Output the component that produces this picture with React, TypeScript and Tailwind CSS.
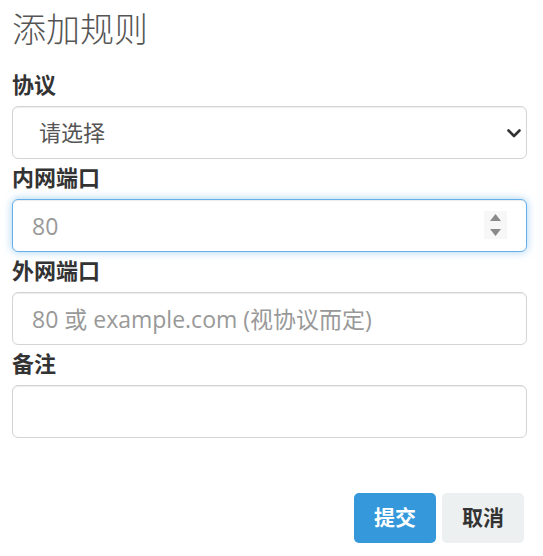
import React from "react";

const fontStack = '"Open Sans", "Noto Sans CJK SC", sans-serif';

function Label({ children, first }: { children: React.ReactNode; first?: boolean }) {
  return (
    <label
      className={`block h-[32px] leading-[32px] text-[22px] font-bold text-[#333] mb-[6px] ${first ? "mt-0" : "mt-[2px]"}`}
    >
      {children}
    </label>
  );
}

export default function App() {
  return (
    <div
      className="w-[543px] h-[556px] bg-white pl-[12px] pr-[16px] overflow-hidden"
      style={{ fontFamily: fontStack }}
    >
      <h3 className="mt-[7px] mb-[17px] h-[44px] leading-[44px] text-[34px] font-light text-[#555]">
        添加规则
      </h3>
      <form className="flex flex-col">
        <Label first>协议</Label>
        <div className="relative">
          <select
            className="block w-full h-[53px] appearance-none rounded-[6px] border border-[#d4d4d4] bg-white pl-[26px] pr-10 text-[22px] text-[#555] shadow-[inset_0_1px_1px_rgba(0,0,0,0.075)] outline-none"
            defaultValue=""
          >
            <option value="">请选择</option>
            <option value="tcp">TCP</option>
            <option value="udp">UDP</option>
            <option value="http">HTTP</option>
          </select>
          <svg
            className="pointer-events-none absolute right-[6px] top-[23px]"
            width="14"
            height="9"
            viewBox="0 0 14 9"
          >
            <path d="M1.5 1.5 L7 7 L12.5 1.5" fill="none" stroke="#333" strokeWidth="2.6" strokeLinecap="round" strokeLinejoin="round" />
          </svg>
        </div>

        <Label>内网端口</Label>
        <div className="relative">
          <input
            type="text"
            placeholder="80"
            className="block w-full h-[53px] rounded-[6px] border border-[#66afe9] bg-white pl-[19px] pr-12 text-[23px] text-[#555] placeholder:text-[#999] outline-none shadow-[inset_0_1px_1px_rgba(0,0,0,0.075),0_0_8px_rgba(102,175,233,0.6)]"
          />
          <div className="pointer-events-none absolute right-[20px] top-[12px] w-[23px] h-[28px] bg-[#f7f7f7] flex flex-col items-center justify-center gap-[8px]">
            <svg width="11" height="7" viewBox="0 0 11 7">
              <path d="M0 7 L5.5 0 L11 7 Z" fill="#8a8a8a" />
            </svg>
            <svg width="11" height="7" viewBox="0 0 11 7">
              <path d="M0 0 L5.5 7 L11 0 Z" fill="#8a8a8a" />
            </svg>
          </div>
        </div>

        <Label>外网端口</Label>
        <input
          type="text"
          placeholder="80 或 example.com (视协议而定)"
          className="block w-full h-[53px] rounded-[6px] border border-[#d4d4d4] bg-white pl-[19px] pr-4 text-[23px] text-[#555] placeholder:text-[#999] outline-none shadow-[inset_0_1px_1px_rgba(0,0,0,0.075)]"
        />

        <Label>备注</Label>
        <input
          type="text"
          className="block w-full h-[53px] rounded-[6px] border border-[#d4d4d4] bg-white pl-[19px] pr-4 text-[23px] text-[#555] outline-none shadow-[inset_0_1px_1px_rgba(0,0,0,0.075)]"
        />
      </form>
      <div className="flex justify-end gap-[6px] mt-[55px] pr-[3px]">
        <button
          type="button"
          className="w-[82px] h-[50px] rounded-[5px] bg-[#3498db] text-white text-[21px] font-bold"
        >
          提交
        </button>
        <button
          type="button"
          className="w-[82px] h-[50px] rounded-[5px] bg-[#ecf0f1] text-[#333] text-[21px] font-bold"
        >
          取消
        </button>
      </div>
    </div>
  );
}
